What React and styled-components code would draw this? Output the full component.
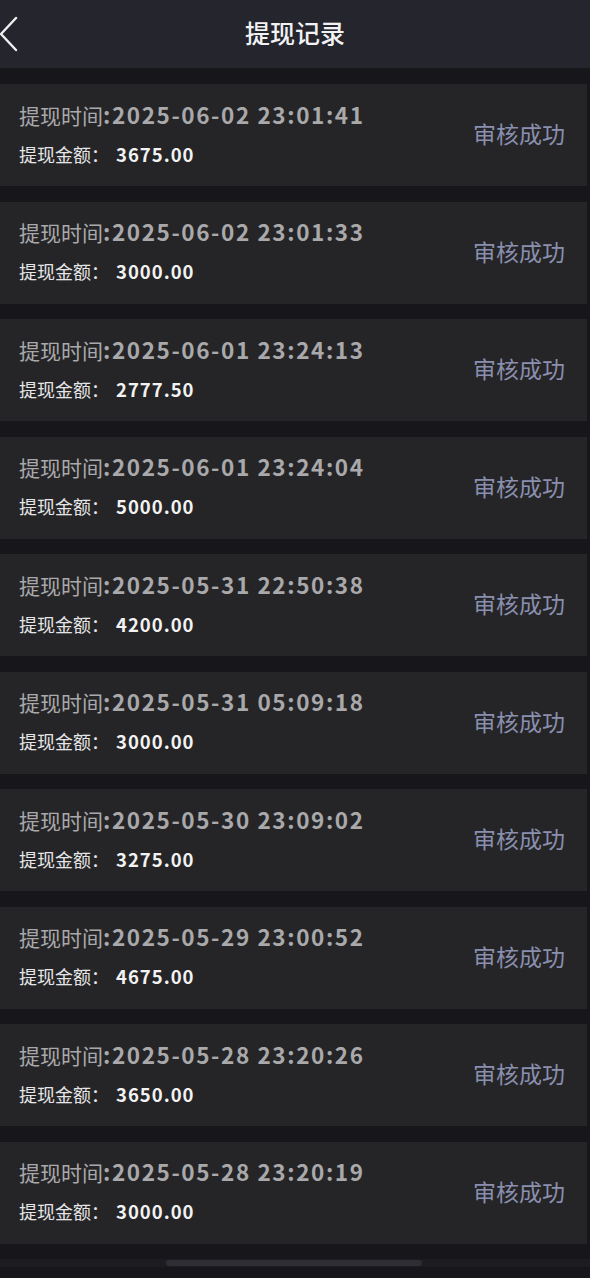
import React from "react";
import styled, { createGlobalStyle } from "styled-components";

const Global = createGlobalStyle`
  html, body { margin: 0; padding: 0; background: #17171b; }
  body { font-family: "Noto Sans CJK SC", "Noto Sans", sans-serif; }
`;

const Page = styled.div`
  width: 590px;
  min-height: 1278px;
  background: #17171b;
  display: flex;
  flex-direction: column;
`;

const Header = styled.header`
  height: 68px;
  background: #25252d;
  display: flex;
  align-items: center;
  justify-content: center;
  position: relative;
`;

const Back = styled.button`
  position: absolute;
  left: 0;
  top: 16px;
  width: 24px;
  height: 36px;
  padding: 0;
  border: 0;
  background: none;
  display: flex;
  align-items: center;
`;

const Title = styled.h1`
  margin: 0 0 5px 0;
  font-size: 25px;
  line-height: 34px;
  font-weight: 500;
  color: #f2f2f4;
`;

const List = styled.div`
  display: flex;
  flex-direction: column;
  gap: 15.5px;
  padding: 16px 3px 0 0;
`;

const Card = styled.div`
  height: 102px;
  background: #252527;
  display: flex;
  align-items: center;
  justify-content: space-between;
  padding: 0 22px 0 19px;
  box-sizing: border-box;
`;

const Info = styled.div`
  display: flex;
  flex-direction: column;
  gap: 12px;
  margin-bottom: 4px;
`;

const TimeLine = styled.div`
  font-size: 21px;
  line-height: 28px;
  color: #a9a9ab;
  white-space: nowrap;
`;

const TimeValue = styled.span`
  font-size: 22.5px;
  font-weight: 700;
  letter-spacing: 1.6px;
`;

const AmountLine = styled.div`
  font-size: 18px;
  line-height: 26px;
  color: #e6e6e8;
  white-space: nowrap;
`;

const AmountValue = styled.span`
  font-size: 18.5px;
  font-weight: 700;
  color: #f2f2f2;
  letter-spacing: 1px;
  margin-left: 7px;
`;

const Status = styled.div`
  font-size: 23px;
  line-height: 30px;
  color: #8a8fae;
  margin-bottom: 4px;
`;

const ScrollTrack = styled.div`
  margin-top: 15px;
  height: 8px;
  background: #1d1d21;
  display: flex;
  justify-content: center;
`;

const ScrollThumb = styled.div`
  width: 256px;
  height: 6px;
  margin-left: -2px;
  margin-top: 1px;
  border-radius: 3px;
  background: #2e2e34;
`;

const records = [
  ["2025-06-02 23:01:41", "3675.00"],
  ["2025-06-02 23:01:33", "3000.00"],
  ["2025-06-01 23:24:13", "2777.50"],
  ["2025-06-01 23:24:04", "5000.00"],
  ["2025-05-31 22:50:38", "4200.00"],
  ["2025-05-31 05:09:18", "3000.00"],
  ["2025-05-30 23:09:02", "3275.00"],
  ["2025-05-29 23:00:52", "4675.00"],
  ["2025-05-28 23:20:26", "3650.00"],
  ["2025-05-28 23:20:19", "3000.00"],
];

export default function App() {
  return (
    <Page>
      <Global />
      <Header>
        <Back aria-label="back">
          <svg width="20" height="36" viewBox="0 0 20 36" fill="none">
            <path d="M16 2 L1 18 L16 34" stroke="#f0f0f2" strokeWidth="2.4" strokeLinecap="round" strokeLinejoin="round" />
          </svg>
        </Back>
        <Title>提现记录</Title>
      </Header>
      <List>
        {records.map(([t, a], i) => (
          <Card key={i}>
            <Info>
              <TimeLine>
                提现时间<TimeValue>:{t}</TimeValue>
              </TimeLine>
              <AmountLine>
                提现金额：<AmountValue>{a}</AmountValue>
              </AmountLine>
            </Info>
            <Status>审核成功</Status>
          </Card>
        ))}
      </List>
      <ScrollTrack>
        <ScrollThumb />
      </ScrollTrack>
    </Page>
  );
}
